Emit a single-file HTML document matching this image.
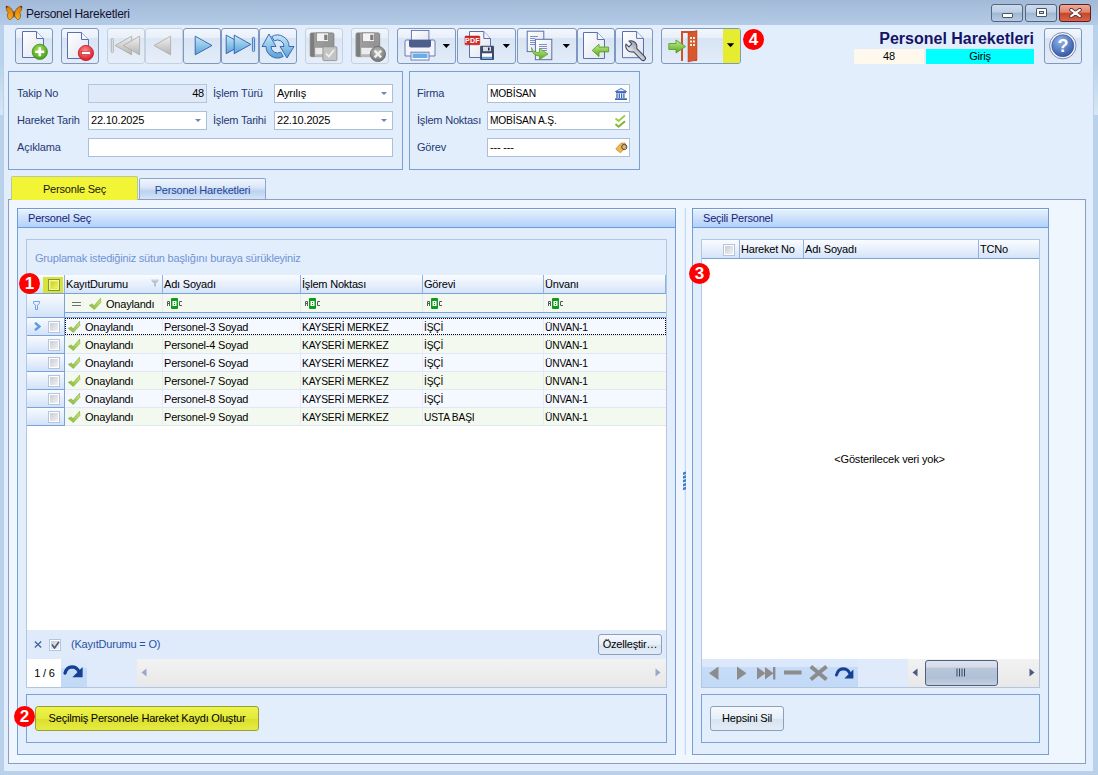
<!DOCTYPE html>
<html><head><meta charset="utf-8">
<style>
*{box-sizing:border-box;margin:0;padding:0}
html,body{width:1098px;height:775px;overflow:hidden}
body{position:relative;background:#b9d1ea;font-family:"Liberation Sans",sans-serif;font-size:11px;color:#000;letter-spacing:-0.2px}
.a{position:absolute}
#title{left:0;top:0;width:1098px;height:25px;background:linear-gradient(#a2bad8,#b3cbe6)}
#client{left:4px;top:25px;width:1089px;height:746px;background:#e3eefc}
.tb{position:absolute;top:28px;height:36px;border:1px solid #7f98c0;border-radius:3px;background:linear-gradient(#f3f7fd 0%,#e8eff9 26%,#d8e4f4 28%,#e3ecf8 100%)}
.tb.dis{border-color:#c3d1e4;background:linear-gradient(#f1f5fb 0%,#e9eff8 26%,#dde7f4 28%,#e6eef9 100%)}
.tb svg{position:absolute;left:-1px;top:-1px}
.wbtn{width:32px;height:18px;border:1px solid #56657c;border-radius:3px;background:linear-gradient(#cddcee 0%,#bccfe6 45%,#9fb6d2 50%,#b6cce6 100%)}
.wbtn.close{border-color:#5e1e1e;background:linear-gradient(#eeaa98 0%,#e0846c 45%,#c8452a 52%,#d8664a 100%)}
.badge{position:absolute;width:21px;height:21px;border-radius:50%;background:#f00;color:#fff;font-weight:bold;font-size:17px;line-height:22px;text-align:center;letter-spacing:0}
.gb{position:absolute;border:1px solid #7a9fd6;background:#e3eefd}
.lbl{position:absolute;color:#1f3a74;line-height:13px}
.fld{position:absolute;height:19px;border:1px solid #a9bfdc;background:#fff;line-height:17px;padding-left:2px;color:#000}
.ddarr{position:absolute;right:5px;top:7px;width:0;height:0;border-left:3.5px solid transparent;border-right:3.5px solid transparent;border-top:3.5px solid #6b88b4}
.gbh{position:absolute;height:20px;border:1px solid #6f9ad6;background:linear-gradient(#ffffff 0,#e4effd 8%,#cde1fb 50%,#b0d2fb 100%);padding-left:10px;line-height:19px;color:#16227a}
.hdr{position:absolute;height:19px;border-right:1px solid #8fb2e2;border-bottom:1px solid #7aa2d8;background:linear-gradient(#fafcff,#e8f0fc 50%,#d4e4f9);line-height:18px}
.ind{position:absolute;width:38px;border-right:1px solid #7aa2d8;border-bottom:1px solid #7aa2d8;background:linear-gradient(#f8fbff,#d2e2f9)}
.chk{position:absolute;width:12px;height:12px;border:1px solid #b3c5de;background:linear-gradient(135deg,#c4c8d0,#f6f6f6);box-shadow:inset 0 0 0 1px #fff}
.row{position:absolute;width:601px;height:18px;border-bottom:1px solid #dfe9f6}
.abc{position:absolute;height:11px;font-family:"Liberation Mono",monospace;font-size:8px;line-height:11px;letter-spacing:0}
.abc span{display:inline-block;width:5px;text-align:center}
.abc .g{color:#707070}
.abc .b{background:#16a030;color:#fff;width:7px;margin:0 0.5px}
.btn{position:absolute;border:1px solid #8ba0bc;border-radius:3px;background:linear-gradient(#f6f9fd,#e6eef8 50%,#d8e3f1 52%,#e4ecf6);text-align:center;color:#000}
</style></head>
<body>
<div id="title" class="a"></div>
<div id="client" class="a"></div>
<div class="a" style="left:0;top:62px;width:3px;height:53px;background:linear-gradient(#b9d1ea,#d8e6f3)"></div>
<div class="a" style="left:1094px;top:62px;width:4px;height:53px;background:linear-gradient(#b9d1ea,#d8e6f3)"></div>
<!-- titlebar -->
<svg class="a" style="left:5px;top:5px" width="18" height="16" viewBox="0 0 18 16">
 <defs><linearGradient id="bf" x1="0" y1="0" x2="0" y2="1"><stop offset="0" stop-color="#d87a0c"/><stop offset="0.55" stop-color="#ee960e"/><stop offset="1" stop-color="#f8ae18"/></linearGradient></defs>
 <path d="M8.4 8 C7.2 3.5 4.5 1.2 1.2 1.3 C0.9 3.5 1.6 6 3.2 7.6 C1.8 9.3 2 13 4.3 14.6 C6.2 15.2 7.6 12.5 8.4 10.5 Z" fill="url(#bf)" stroke="#6e3c0c" stroke-width="0.6"/>
 <path d="M9.6 8 C10.8 3.5 13.5 1.2 16.8 1.3 C17.1 3.5 16.4 6 14.8 7.6 C16.2 9.3 16 13 13.7 14.6 C11.8 15.2 10.4 12.5 9.6 10.5 Z" fill="url(#bf)" stroke="#6e3c0c" stroke-width="0.6"/>
 <path d="M8.5 6 L9.5 6 L9.4 12.5 L8.6 12.5 Z" fill="#4a2410"/>
 <path d="M0.8 1 L3 1.6 L1.6 3.2 Z M17.2 1 L15 1.6 L16.4 3.2 Z" fill="#4a2a14"/>
</svg>
<div class="a" style="left:26px;top:7px;font-size:12px;color:#15102e;line-height:14px;letter-spacing:-0.25px">Personel Hareketleri</div>
<div class="a wbtn" style="left:991px;top:4px"><div style="position:absolute;left:10px;top:8px;width:11px;height:5px;border:1px solid #4a5568;background:#fff;border-radius:1px"></div></div>
<div class="a wbtn" style="left:1025px;top:4px"><div style="position:absolute;left:10px;top:3px;width:11px;height:9px;border:1px solid #4a5568;background:#fff;border-radius:1px"><div style="position:absolute;left:2px;top:2px;width:5px;height:3px;border:1px solid #4a5568;background:#c8d8ea"></div></div></div>
<div class="a wbtn close" style="left:1059px;top:4px"><svg style="position:absolute;left:9px;top:3px" width="13" height="10" viewBox="0 0 13 10"><path d="M2.2 1.8 L10.8 8.2 M10.8 1.8 L2.2 8.2" stroke="#4a2a2a" stroke-width="3.8" stroke-linecap="round"/><path d="M2.2 1.8 L10.8 8.2 M10.8 1.8 L2.2 8.2" stroke="#fff" stroke-width="2.2" stroke-linecap="round"/></svg></div>
<!-- toolbar -->
<div class="tb" style="left:15px;width:38px"><svg width="38" height="36" viewBox="0 0 38 36">
 <defs><linearGradient id="pg" x1="0" y1="0" x2="1" y2="1"><stop offset="0" stop-color="#ffffff"/><stop offset="1" stop-color="#dfe4ee"/></linearGradient>
 <radialGradient id="gg" cx="0.45" cy="0.35" r="0.7"><stop offset="0" stop-color="#a6de5a"/><stop offset="1" stop-color="#3f9a16"/></radialGradient>
 <radialGradient id="rg" cx="0.45" cy="0.35" r="0.7"><stop offset="0" stop-color="#ff8c8c"/><stop offset="1" stop-color="#d8101c"/></radialGradient>
 <radialGradient id="xg" cx="0.45" cy="0.35" r="0.7"><stop offset="0" stop-color="#bdbdbd"/><stop offset="1" stop-color="#6e6e6e"/></radialGradient>
 <linearGradient id="ag" x1="0" y1="0" x2="0" y2="1"><stop offset="0" stop-color="#c4e9f8"/><stop offset="1" stop-color="#5aa1d8"/></linearGradient>
 <linearGradient id="dg" x1="0" y1="0" x2="0" y2="1"><stop offset="0" stop-color="#f0f0f0"/><stop offset="1" stop-color="#b4b4b4"/></linearGradient>
 <linearGradient id="grn" x1="0" y1="0" x2="0" y2="1"><stop offset="0" stop-color="#c7ec8e"/><stop offset="1" stop-color="#58a824"/></linearGradient>
 <linearGradient id="ck" x1="1" y1="0" x2="0" y2="1"><stop offset="0" stop-color="#cae870"/><stop offset="1" stop-color="#86b83a"/></linearGradient>
 <linearGradient id="wg" x1="0" y1="0" x2="1" y2="0"><stop offset="0" stop-color="#eef0f4"/><stop offset="1" stop-color="#98a0ac"/></linearGradient>
 <linearGradient id="fl" x1="0" y1="0" x2="1" y2="1"><stop offset="0" stop-color="#a8a8a8"/><stop offset="1" stop-color="#8a8a8a"/></linearGradient>
 </defs>
 <path d="M7.5 3.5 H21.5 L28.5 10.5 V29.5 H7.5 Z" fill="url(#pg)" stroke="#5a6fae" stroke-width="1"/>
 <path d="M21.5 3.5 V10.5 H28.5" fill="#f4f6fa" stroke="#5a6fae" stroke-width="1"/>
 <circle cx="24.8" cy="23.8" r="7.6" fill="url(#gg)" stroke="#3b8a18" stroke-width="0.8"/>
 <path d="M24.8 19.3 V28.3 M20.3 23.8 H29.3" stroke="#fff" stroke-width="2.6"/>
</svg></div>
<div class="tb" style="left:61px;width:38px"><svg width="38" height="36" viewBox="0 0 38 36">
 <path d="M6.5 4.5 H20.5 L27.5 11.5 V30.5 H6.5 Z" fill="url(#pg)" stroke="#5a6fae" stroke-width="1"/>
 <path d="M20.5 4.5 V11.5 H27.5" fill="#f4f6fa" stroke="#5a6fae" stroke-width="1"/>
 <circle cx="24.9" cy="25" r="7.6" fill="url(#rg)" stroke="#c01020" stroke-width="0.8"/>
 <rect x="20.3" y="23.3" width="9.2" height="3.4" fill="#fff" stroke="#b01020" stroke-width="0.6"/>
</svg></div>
<div class="tb dis" style="left:107px;width:38px"><svg width="38" height="36" viewBox="0 0 38 36">
 <rect x="4.3" y="10.4" width="2" height="14.2" rx="1" fill="#e6e6e6" stroke="#a6a6a6" stroke-width="0.8"/>
 <path d="M8.2 17.5 L24.6 8.2 V26.8 Z" fill="url(#dg)" stroke="#a8a8a8" stroke-width="0.8"/>
 <path d="M16.2 17.5 L32.6 8.2 V26.8 Z" fill="url(#dg)" stroke="#a8a8a8" stroke-width="0.8"/>
</svg></div>
<div class="tb dis" style="left:145px;width:38px"><svg width="38" height="36" viewBox="0 0 38 36">
 <path d="M9 17.5 L25.6 8.2 V26.8 Z" fill="url(#dg)" stroke="#a8a8a8" stroke-width="0.8"/>
</svg></div>
<div class="tb" style="left:183px;width:38px"><svg width="38" height="36" viewBox="0 0 38 36">
 <path d="M12.2 8.2 L29 17.5 L12.2 26.8 Z" fill="url(#ag)" stroke="#2e5fae" stroke-width="0.9"/>
</svg></div>
<div class="tb" style="left:221px;width:38px"><svg width="38" height="36" viewBox="0 0 38 36">
 <path d="M5.2 7.1 L21.9 16.4 L5.2 25.7 Z" fill="url(#ag)" stroke="#2e5fae" stroke-width="0.9"/>
 <path d="M13.2 7.1 L29.9 16.4 L13.2 25.7 Z" fill="url(#ag)" stroke="#2e5fae" stroke-width="0.9"/>
 <rect x="31.4" y="9.3" width="2.2" height="14.2" rx="1" fill="#a8d4f0" stroke="#2e5fae" stroke-width="0.8"/>
</svg></div>
<div class="tb" style="left:259px;width:38px"><svg width="38" height="36" viewBox="0 0 38 36">
 <path d="M24.25 28.46 A11.5 11.5 0 0 1 7 18.5 L3 18.5 L10 6 L17 18.5 L12 18.5 A6.5 6.5 0 0 0 21.75 24.13 Z" fill="url(#ag)" stroke="#2e5fae" stroke-width="0.9" stroke-linejoin="round"/>
 <path d="M12.75 8.54 A11.5 11.5 0 0 1 30 18.5 L35 18.5 L28 30 L21 18.5 L25 18.5 A6.5 6.5 0 0 0 15.25 12.87 Z" fill="url(#ag)" stroke="#2e5fae" stroke-width="0.9" stroke-linejoin="round"/>
</svg></div>
<div class="tb dis" style="left:305px;width:38px"><svg width="38" height="36" viewBox="0 0 38 36">
 <rect x="5.2" y="4.9" width="23.7" height="23.7" rx="1.5" fill="url(#fl)" stroke="#7a7a7a" stroke-width="0.8"/>
 <rect x="5.6" y="5.3" width="3.6" height="23" fill="#7c7c7c"/>
 <rect x="11.5" y="4.9" width="12" height="8.8" fill="#f2f2f2" stroke="#808080" stroke-width="0.7"/>
 <rect x="19.2" y="6.8" width="3.2" height="5.2" fill="#7e7e7e"/>
 <rect x="10.2" y="19.8" width="13.2" height="8.6" fill="#ececec"/>
 <rect x="10.2" y="26.2" width="13.2" height="2.2" fill="#b8b8b8"/>
 <rect x="17.9" y="18.8" width="14" height="13.8" rx="1" fill="#c4c4c4" stroke="#8a8a8a" stroke-width="0.8"/>
 <path d="M21 25.5 L23.8 28.5 L29 22" fill="none" stroke="#f2f2f2" stroke-width="1.6"/>
</svg></div>
<div class="tb dis" style="left:351px;width:38px"><svg width="38" height="36" viewBox="0 0 38 36">
 <rect x="5" y="4.9" width="23.7" height="23.7" rx="1.5" fill="url(#fl)" stroke="#7a7a7a" stroke-width="0.8"/>
 <rect x="5.4" y="5.3" width="3.6" height="23" fill="#7c7c7c"/>
 <rect x="11.5" y="4.9" width="12" height="8.8" fill="#f2f2f2" stroke="#808080" stroke-width="0.7"/>
 <rect x="19.2" y="6.8" width="3.2" height="5.2" fill="#7e7e7e"/>
 <rect x="10.2" y="19.8" width="13.2" height="8.6" fill="#ececec"/>
 <rect x="10.2" y="26.2" width="13.2" height="2.2" fill="#b8b8b8"/>
 <circle cx="26.9" cy="26" r="7.6" fill="url(#xg)" stroke="#6a6a6a" stroke-width="0.8"/>
 <path d="M23.6 22.7 L30.2 29.3 M30.2 22.7 L23.6 29.3" stroke="#f0f0f0" stroke-width="2.4"/>
</svg></div>
<div class="tb" style="left:397px;width:59px"><svg width="59" height="36" viewBox="0 0 59 36">
 <rect x="14.4" y="2.4" width="17.5" height="12" fill="url(#pg)" stroke="#5a6fae" stroke-width="0.9"/>
 <path d="M9 12 H37 Q38 12 38 14 V28 H8 V14 Q8 12 9 12 Z" fill="#f2f4fa" stroke="#5a6fae" stroke-width="0.9"/>
 <path d="M12 12 H34 V17.5 Q34 19.5 32 19.5 H14 Q12 19.5 12 17.5 Z" fill="#4e5f8e"/>
 <rect x="14" y="24.2" width="18" height="7.8" fill="#fff" stroke="#5a6fae" stroke-width="0.9"/>
 <rect x="15.5" y="25.5" width="15" height="4.5" fill="#6aaee8"/>
 <path d="M45.7 15.9 H53 L49.35 19.9 Z" fill="#000"/>
</svg></div>
<div class="tb" style="left:457px;width:59px"><svg width="59" height="36" viewBox="0 0 59 36">
 <path d="M12.5 3.5 H26.8 L33.5 10.5 V29.5 H12.5 Z" fill="url(#pg)" stroke="#5a6fae" stroke-width="1"/>
 <path d="M26.8 3.5 V10.5 H33.5" fill="#f4f6fa" stroke="#5a6fae" stroke-width="1"/>
 <rect x="8" y="8" width="14.8" height="8.8" rx="0.8" fill="#d42a2a" stroke="#a01818" stroke-width="0.5"/>
 <text x="15.4" y="15.2" font-family="Liberation Sans" font-weight="bold" font-size="7" fill="#fff" text-anchor="middle" letter-spacing="0.3">PDF</text>
 <rect x="23.1" y="17.8" width="13.9" height="14.1" rx="1" fill="#3c4a6c"/>
 <rect x="26" y="18.8" width="8" height="4.4" fill="#d8dde8"/>
 <rect x="31" y="19.5" width="1.5" height="3" fill="#223"/>
 <rect x="25" y="25.3" width="10" height="5.6" fill="#fff"/>
 <rect x="25" y="28.8" width="10" height="2.1" fill="#5aa0e0"/>
 <path d="M45.7 15.9 H53 L49.35 19.9 Z" fill="#000"/>
</svg></div>
<div class="tb" style="left:517px;width:60px"><svg width="59" height="36" viewBox="0 0 59 36">
 <rect x="10.2" y="3.2" width="16.6" height="20.4" fill="url(#pg)" stroke="#5a6fae" stroke-width="1"/>
 <path d="M13 8.5 H21 M13 10.5 H18 M13 12.5 H18 M13 14.5 H18 M13 16.5 H18" stroke="#8090c8" stroke-width="1"/>
 <rect x="18.4" y="11.3" width="16.4" height="20.4" fill="url(#pg)" stroke="#5a6fae" stroke-width="1"/>
 <path d="M22 16.5 H30 M22 18.5 H30 M22 20.5 H30 M22 22.5 H30" stroke="#8090c8" stroke-width="1"/>
 <path d="M14.5 19.5 Q15.5 24.5 22.5 24.5 V20.5 L31 26 L22.5 31.5 V28 Q15 28 14.5 19.5 Z" fill="url(#grn)" stroke="#4a9a1c" stroke-width="0.7"/>
 <path d="M45.7 15.9 H53 L49.35 19.9 Z" fill="#000"/>
</svg></div>
<div class="tb" style="left:577px;width:38px"><svg width="38" height="36" viewBox="0 0 38 36">
 <path d="M6.5 4.5 H20.3 L27.5 11.5 V30.5 H6.5 Z" fill="url(#pg)" stroke="#5a6fae" stroke-width="1"/>
 <path d="M20.3 4.5 V11.5 H27.5" fill="#f4f6fa" stroke="#5a6fae" stroke-width="1"/>
 <path d="M15.2 22.4 L22 16.2 V19.1 H31.6 V23.9 H22 V28.6 Z" fill="url(#grn)" stroke="#4a9a1c" stroke-width="0.8"/>
</svg></div>
<div class="tb" style="left:615px;width:38px"><svg width="38" height="36" viewBox="0 0 38 36">
 <path d="M7.5 3.5 H21.6 L28.5 10.4 V29.7 H7.5 Z" fill="url(#pg)" stroke="#5a6fae" stroke-width="1"/>
 <path d="M21.6 3.5 V10.4 H28.5" fill="#f4f6fa" stroke="#5a6fae" stroke-width="1"/>
 <g transform="translate(16.5 18.5) rotate(-45)"><path d="M-2.3 16.5 A2.3 2.3 0 0 0 2.3 16.5 L2.3 5 A6 6 0 0 0 2.1 -5.62 L2.1 -1.6 L-2.1 -1.6 L-2.1 -5.62 A6 6 0 0 0 -2.3 5 Z" fill="url(#wg)" stroke="#3c4458" stroke-width="1" stroke-linejoin="round"/></g>
</svg></div>
<div class="tb" style="left:661px;width:80px;overflow:hidden"><svg width="80" height="36" viewBox="0 0 80 36">
 <rect x="62" y="1" width="18" height="34" fill="#e6ec30"/>
 <path d="M20 3 H36 V33 H33 V5 H22 V33 H20 Z" fill="#d4502a"/>
 <path d="M27 5 L36 2.5 V32 L27 34 Z" fill="#d9572e" stroke="#b03a18" stroke-width="0.5"/>
 <rect x="29" y="9" width="2" height="2" fill="#e8f4e0"/><rect x="32" y="9" width="2" height="2" fill="#e8f4e0"/>
 <rect x="29" y="12.5" width="2" height="2" fill="#e8f4e0"/><rect x="32" y="12.5" width="2" height="2" fill="#e8f4e0"/>
 <rect x="29" y="16" width="2" height="2" fill="#e8f4e0"/><rect x="32" y="16" width="2" height="2" fill="#e8f4e0"/>
 <path d="M7.8 15.5 H15 V12 L24.6 18.5 L15 25 V21.5 H7.8 Z" fill="url(#grn)" stroke="#4a9a1c" stroke-width="0.8"/>
 <path d="M65.9 15.3 H73.2 L69.55 19.3 Z" fill="#000"/>
</svg></div>
<div class="badge" style="left:743px;top:29px">4</div>
<!-- header right -->
<div class="a" style="left:854px;top:30px;width:180px;text-align:right;font-weight:bold;font-size:16px;line-height:18px;color:#141466;letter-spacing:0">Personel Hareketleri</div>
<div class="a" style="left:854px;top:49px;width:70px;height:15px;background:#fff8ec;text-align:center;line-height:15px">48</div>
<div class="a" style="left:926px;top:49px;width:108px;height:15px;background:#00ffff;text-align:center;line-height:15px">Giriş</div>
<div class="tb" style="left:1044px;width:38px"><svg width="38" height="36" viewBox="0 0 38 36">
 <defs><radialGradient id="hg" cx="0.4" cy="0.3" r="0.8"><stop offset="0" stop-color="#8fb4ea"/><stop offset="1" stop-color="#2a4fa0"/></radialGradient></defs>
 <circle cx="18.8" cy="17.7" r="13.2" fill="#f4f6fa" stroke="#7d8aa8" stroke-width="1"/>
 <circle cx="18.8" cy="17.7" r="11" fill="url(#hg)" stroke="#2a4690" stroke-width="0.6"/>
 <text x="18.8" y="23.8" font-family="Liberation Sans" font-weight="bold" font-size="18" fill="#fff" text-anchor="middle">?</text>
</svg></div>
<!-- forms -->
<div class="gb" style="left:8px;top:71px;width:395px;height:99px"></div>
<div class="lbl" style="left:17px;top:87px">Takip No</div>
<div class="fld" style="left:88px;top:84px;width:119px;background:#dfe9f7;border-color:#b3c6de;text-align:right;padding-right:2px">48</div>
<div class="lbl" style="left:213px;top:87px">İşlem Türü</div>
<div class="fld" style="left:274px;top:84px;width:119px">Ayrılış<div class="ddarr"></div></div>
<div class="lbl" style="left:17px;top:114px">Hareket Tarih</div>
<div class="fld" style="left:88px;top:111px;width:119px">22.10.2025<div class="ddarr"></div></div>
<div class="lbl" style="left:213px;top:114px">İşlem Tarihi</div>
<div class="fld" style="left:274px;top:111px;width:119px">22.10.2025<div class="ddarr"></div></div>
<div class="lbl" style="left:17px;top:141px">Açıklama</div>
<div class="fld" style="left:88px;top:138px;width:305px"></div>

<div class="gb" style="left:409px;top:71px;width:231px;height:99px"></div>
<div class="lbl" style="left:417px;top:87px">Firma</div>
<div class="fld" style="left:487px;top:84px;width:143px"><span style="display:inline-block;transform:scaleX(0.93);transform-origin:0 0">MOBİSAN</span>
<svg style="position:absolute;left:126px;top:3px" width="14" height="13" viewBox="0 0 14 13"><path d="M7 0.5 L12.5 3.5 H1.5 Z" fill="#e8f0fc" stroke="#3b68b8" stroke-width="0.9"/><rect x="2" y="4" width="10" height="1.2" fill="#3b68b8"/><path d="M3 5.5 V10 M5.3 5.5 V10 M7.6 5.5 V10 M9.9 5.5 V10" stroke="#3b68b8" stroke-width="1.3"/><rect x="1" y="10.3" width="12" height="1.8" rx="0.6" fill="#3b68b8"/></svg></div>
<div class="lbl" style="left:417px;top:114px">İşlem Noktası</div>
<div class="fld" style="left:487px;top:111px;width:143px"><span style="display:inline-block;transform:scaleX(0.93);transform-origin:0 0">MOBİSAN A.Ş.</span>
<svg style="position:absolute;left:126px;top:2px" width="13" height="15" viewBox="0 0 13 15"><path d="M1.5 4.5 L4.5 7 L11 1.5" fill="none" stroke="#9ccc48" stroke-width="1.8"/><path d="M1.5 10 L4.5 12.8 L11 7.3" fill="none" stroke="#7cb42c" stroke-width="1.8"/></svg></div>
<div class="lbl" style="left:417px;top:141px">Görev</div>
<div class="fld" style="left:487px;top:138px;width:143px">--- ---
<svg style="position:absolute;left:127px;top:3px" width="13" height="12" viewBox="0 0 13 12"><path d="M0.8 7 L6 1.2 L10 1 L11 5 L5.5 10.8 Z" fill="#f2b850" stroke="#c88420" stroke-width="0.8"/><circle cx="9.3" cy="5" r="2.6" fill="none" stroke="#2a3450" stroke-width="0.9"/></svg></div>
<!-- tabs -->
<div class="a" style="left:8px;top:199px;width:1078px;height:565px;border:1px solid #8e9ec2;background:#f0f6fe"></div>
<div class="a" style="left:11px;top:176px;width:127px;height:24px;background:#f2f535;border:1px solid #b8c8a0;border-bottom:none;border-radius:2px 2px 0 0;text-align:center;line-height:24px;color:#161616">Personle Seç</div>
<div class="a" style="left:139px;top:178px;width:127px;height:21px;background:linear-gradient(#f0f5fd 0%,#dce8f8 40%,#bcd2f0 62%,#d6e4f7 100%);border:1px solid #8aa6cf;border-bottom:none;border-radius:2px 2px 0 0;text-align:center;line-height:22px;color:#23479a">Personel Hareketleri</div>
<!-- left groupbox -->
<div class="gb" style="left:17px;top:208px;width:659px;height:547px"></div>
<div class="gbh" style="left:17px;top:208px;width:659px">Personel Seç</div>
<div class="a" style="left:26px;top:239px;width:641px;height:449px;border:1px solid #b3c6df;background:#fff"></div>
<div class="a" style="left:27px;top:240px;width:639px;height:35px;background:#e3eefd"></div>
<div class="a" style="left:35px;top:252px;color:#6f94d2;line-height:13px">Gruplamak istediğiniz sütun başlığını buraya sürükleyiniz</div>
<div class="hdr" style="left:27px;top:275px;width:38px"></div>
<div class="a" style="left:43px;top:277px;width:20px;height:16px;background:#d6e33a"></div>
<div class="chk" style="left:48px;top:279px;background:#dfe850;border-color:#8c9438;box-shadow:inset 0 0 0 1px #f4f890"><div style="position:absolute;left:2px;top:2px;width:6px;height:6px;background:linear-gradient(135deg,#c8d030,#eef460)"></div></div>
<div class="hdr" style="left:65px;top:275px;width:98px;padding-left:1px">KayıtDurumu</div>
<div class="hdr" style="left:163px;top:275px;width:138px;padding-left:1px">Adı Soyadı</div>
<div class="hdr" style="left:301px;top:275px;width:122px;padding-left:1px">İşlem Noktası</div>
<div class="hdr" style="left:423px;top:275px;width:121px;padding-left:1px">Görevi</div>
<div class="hdr" style="left:544px;top:275px;width:122px;padding-left:1px">Ünvanı</div>
<svg class="a" style="left:151px;top:279px" width="8" height="8" viewBox="0 0 8 8"><path d="M0.5 0.5 H7.5 V2 L5 4.2 V7.5 H3 V4.2 L0.5 2 Z" fill="#b4c2d4"/><path d="M1.5 1 H6.5" stroke="#eef2f8" stroke-width="0.8"/></svg>
<div class="ind" style="left:27px;top:294px;height:24px"></div>
<svg class="a" style="left:32px;top:300px" width="9" height="11" viewBox="0 0 9 11"><path d="M1.5 1.5 H7.5 V3.2 L5.5 5.2 V9.5 H3.5 V5.2 L1.5 3.2 Z" fill="none" stroke="#6fa4e4" stroke-width="1"/></svg>
<div class="a" style="left:65px;top:294px;width:601px;height:19px;background:#f3f9ee;border-bottom:1px solid #7aa2d8"></div>
<div class="a" style="left:162px;top:294px;width:1px;height:18px;background:#e2ecf6"></div>
<div class="a" style="left:300px;top:294px;width:1px;height:18px;background:#e2ecf6"></div>
<div class="a" style="left:422px;top:294px;width:1px;height:18px;background:#e2ecf6"></div>
<div class="a" style="left:543px;top:294px;width:1px;height:18px;background:#e2ecf6"></div>
<div class="a" style="left:72px;top:302px;width:9px;height:1px;background:#707070"></div><div class="a" style="left:72px;top:305px;width:9px;height:1px;background:#707070"></div>
<svg class="a" style="left:89px;top:297px" width="13" height="13" viewBox="0 0 13 13"><path d="M0.3 8.3 L3.5 6.9 L4.9 9.1 L11.5 1.2 L11.8 5.5 L5.3 12.5 Z" fill="url(#ck)" stroke="#7aa83a" stroke-width="0.6" stroke-linejoin="round"/></svg>
<div class="a" style="left:106px;top:298px;line-height:13px">Onaylandı</div>
<svg class="a" style="left:166px;top:298px" width="17" height="11" viewBox="0 0 17 11"><path d="M1 8 V4 Q1 3 2 3 H3 Q4 3 4 4 V8 H3 V6 H2 V8 Z M2 4 V5 H3 V4 Z" fill="#5a5a5a"/><rect x="5" y="0" width="7" height="11" rx="1" fill="#0c9c1c"/><rect x="6.5" y="3" width="4" height="5" fill="#fff"/><rect x="8" y="4" width="1" height="1" fill="#0c9c1c"/><rect x="8" y="6" width="1" height="1" fill="#0c9c1c"/><path d="M13 4 Q13 3 14 3 H16 V4 H14 V7 H16 V8 H14 Q13 8 13 7 Z" fill="#5a5a5a"/></svg>
<svg class="a" style="left:304px;top:298px" width="17" height="11" viewBox="0 0 17 11"><path d="M1 8 V4 Q1 3 2 3 H3 Q4 3 4 4 V8 H3 V6 H2 V8 Z M2 4 V5 H3 V4 Z" fill="#5a5a5a"/><rect x="5" y="0" width="7" height="11" rx="1" fill="#0c9c1c"/><rect x="6.5" y="3" width="4" height="5" fill="#fff"/><rect x="8" y="4" width="1" height="1" fill="#0c9c1c"/><rect x="8" y="6" width="1" height="1" fill="#0c9c1c"/><path d="M13 4 Q13 3 14 3 H16 V4 H14 V7 H16 V8 H14 Q13 8 13 7 Z" fill="#5a5a5a"/></svg>
<svg class="a" style="left:426px;top:298px" width="17" height="11" viewBox="0 0 17 11"><path d="M1 8 V4 Q1 3 2 3 H3 Q4 3 4 4 V8 H3 V6 H2 V8 Z M2 4 V5 H3 V4 Z" fill="#5a5a5a"/><rect x="5" y="0" width="7" height="11" rx="1" fill="#0c9c1c"/><rect x="6.5" y="3" width="4" height="5" fill="#fff"/><rect x="8" y="4" width="1" height="1" fill="#0c9c1c"/><rect x="8" y="6" width="1" height="1" fill="#0c9c1c"/><path d="M13 4 Q13 3 14 3 H16 V4 H14 V7 H16 V8 H14 Q13 8 13 7 Z" fill="#5a5a5a"/></svg>
<svg class="a" style="left:547px;top:298px" width="17" height="11" viewBox="0 0 17 11"><path d="M1 8 V4 Q1 3 2 3 H3 Q4 3 4 4 V8 H3 V6 H2 V8 Z M2 4 V5 H3 V4 Z" fill="#5a5a5a"/><rect x="5" y="0" width="7" height="11" rx="1" fill="#0c9c1c"/><rect x="6.5" y="3" width="4" height="5" fill="#fff"/><rect x="8" y="4" width="1" height="1" fill="#0c9c1c"/><rect x="8" y="6" width="1" height="1" fill="#0c9c1c"/><path d="M13 4 Q13 3 14 3 H16 V4 H14 V7 H16 V8 H14 Q13 8 13 7 Z" fill="#5a5a5a"/></svg>
<div class="a" style="left:65px;top:313px;width:601px;height:5px;background:#e0ebfa;border-bottom:1px solid #7aa2d8"></div>
<div class="ind" style="left:27px;top:318px;height:18px"></div>
<div class="chk" style="left:48px;top:321px"></div>
<div class="row" style="left:65px;top:318px;background:#f5f9ff"></div>
<div class="a" style="left:162px;top:318px;width:1px;height:17px;background:#e3ecf7"></div>
<div class="a" style="left:300px;top:318px;width:1px;height:17px;background:#e3ecf7"></div>
<div class="a" style="left:422px;top:318px;width:1px;height:17px;background:#e3ecf7"></div>
<div class="a" style="left:543px;top:318px;width:1px;height:17px;background:#e3ecf7"></div>
<svg class="a" style="left:68px;top:320px" width="13" height="13" viewBox="0 0 13 13"><path d="M0.3 8.3 L3.5 6.9 L4.9 9.1 L11.5 1.2 L11.8 5.5 L5.3 12.5 Z" fill="url(#ck)" stroke="#7aa83a" stroke-width="0.6" stroke-linejoin="round"/></svg>
<div class="a" style="left:85px;top:321px;line-height:13px">Onaylandı</div>
<div class="a" style="left:164px;top:321px;line-height:13px">Personel-3 Soyad</div>
<div class="a" style="left:302px;top:321px;line-height:13px;transform:scaleX(0.93);transform-origin:0 0">KAYSERİ MERKEZ</div>
<div class="a" style="left:424px;top:321px;line-height:13px;transform:scaleX(0.93);transform-origin:0 0">İŞÇİ</div>
<div class="a" style="left:545px;top:321px;line-height:13px;transform:scaleX(0.93);transform-origin:0 0">ÜNVAN-1</div>
<div class="ind" style="left:27px;top:336px;height:18px"></div>
<div class="chk" style="left:48px;top:339px"></div>
<div class="row" style="left:65px;top:336px;background:#f3f9ee"></div>
<div class="a" style="left:162px;top:336px;width:1px;height:17px;background:#e3ecf7"></div>
<div class="a" style="left:300px;top:336px;width:1px;height:17px;background:#e3ecf7"></div>
<div class="a" style="left:422px;top:336px;width:1px;height:17px;background:#e3ecf7"></div>
<div class="a" style="left:543px;top:336px;width:1px;height:17px;background:#e3ecf7"></div>
<svg class="a" style="left:68px;top:338px" width="13" height="13" viewBox="0 0 13 13"><path d="M0.3 8.3 L3.5 6.9 L4.9 9.1 L11.5 1.2 L11.8 5.5 L5.3 12.5 Z" fill="url(#ck)" stroke="#7aa83a" stroke-width="0.6" stroke-linejoin="round"/></svg>
<div class="a" style="left:85px;top:339px;line-height:13px">Onaylandı</div>
<div class="a" style="left:164px;top:339px;line-height:13px">Personel-4 Soyad</div>
<div class="a" style="left:302px;top:339px;line-height:13px;transform:scaleX(0.93);transform-origin:0 0">KAYSERİ MERKEZ</div>
<div class="a" style="left:424px;top:339px;line-height:13px;transform:scaleX(0.93);transform-origin:0 0">İŞÇİ</div>
<div class="a" style="left:545px;top:339px;line-height:13px;transform:scaleX(0.93);transform-origin:0 0">ÜNVAN-1</div>
<div class="ind" style="left:27px;top:354px;height:18px"></div>
<div class="chk" style="left:48px;top:357px"></div>
<div class="row" style="left:65px;top:354px;background:#f5f9ff"></div>
<div class="a" style="left:162px;top:354px;width:1px;height:17px;background:#e3ecf7"></div>
<div class="a" style="left:300px;top:354px;width:1px;height:17px;background:#e3ecf7"></div>
<div class="a" style="left:422px;top:354px;width:1px;height:17px;background:#e3ecf7"></div>
<div class="a" style="left:543px;top:354px;width:1px;height:17px;background:#e3ecf7"></div>
<svg class="a" style="left:68px;top:356px" width="13" height="13" viewBox="0 0 13 13"><path d="M0.3 8.3 L3.5 6.9 L4.9 9.1 L11.5 1.2 L11.8 5.5 L5.3 12.5 Z" fill="url(#ck)" stroke="#7aa83a" stroke-width="0.6" stroke-linejoin="round"/></svg>
<div class="a" style="left:85px;top:357px;line-height:13px">Onaylandı</div>
<div class="a" style="left:164px;top:357px;line-height:13px">Personel-6 Soyad</div>
<div class="a" style="left:302px;top:357px;line-height:13px;transform:scaleX(0.93);transform-origin:0 0">KAYSERİ MERKEZ</div>
<div class="a" style="left:424px;top:357px;line-height:13px;transform:scaleX(0.93);transform-origin:0 0">İŞÇİ</div>
<div class="a" style="left:545px;top:357px;line-height:13px;transform:scaleX(0.93);transform-origin:0 0">ÜNVAN-1</div>
<div class="ind" style="left:27px;top:372px;height:18px"></div>
<div class="chk" style="left:48px;top:375px"></div>
<div class="row" style="left:65px;top:372px;background:#f3f9ee"></div>
<div class="a" style="left:162px;top:372px;width:1px;height:17px;background:#e3ecf7"></div>
<div class="a" style="left:300px;top:372px;width:1px;height:17px;background:#e3ecf7"></div>
<div class="a" style="left:422px;top:372px;width:1px;height:17px;background:#e3ecf7"></div>
<div class="a" style="left:543px;top:372px;width:1px;height:17px;background:#e3ecf7"></div>
<svg class="a" style="left:68px;top:374px" width="13" height="13" viewBox="0 0 13 13"><path d="M0.3 8.3 L3.5 6.9 L4.9 9.1 L11.5 1.2 L11.8 5.5 L5.3 12.5 Z" fill="url(#ck)" stroke="#7aa83a" stroke-width="0.6" stroke-linejoin="round"/></svg>
<div class="a" style="left:85px;top:375px;line-height:13px">Onaylandı</div>
<div class="a" style="left:164px;top:375px;line-height:13px">Personel-7 Soyad</div>
<div class="a" style="left:302px;top:375px;line-height:13px;transform:scaleX(0.93);transform-origin:0 0">KAYSERİ MERKEZ</div>
<div class="a" style="left:424px;top:375px;line-height:13px;transform:scaleX(0.93);transform-origin:0 0">İŞÇİ</div>
<div class="a" style="left:545px;top:375px;line-height:13px;transform:scaleX(0.93);transform-origin:0 0">ÜNVAN-1</div>
<div class="ind" style="left:27px;top:390px;height:18px"></div>
<div class="chk" style="left:48px;top:393px"></div>
<div class="row" style="left:65px;top:390px;background:#f5f9ff"></div>
<div class="a" style="left:162px;top:390px;width:1px;height:17px;background:#e3ecf7"></div>
<div class="a" style="left:300px;top:390px;width:1px;height:17px;background:#e3ecf7"></div>
<div class="a" style="left:422px;top:390px;width:1px;height:17px;background:#e3ecf7"></div>
<div class="a" style="left:543px;top:390px;width:1px;height:17px;background:#e3ecf7"></div>
<svg class="a" style="left:68px;top:392px" width="13" height="13" viewBox="0 0 13 13"><path d="M0.3 8.3 L3.5 6.9 L4.9 9.1 L11.5 1.2 L11.8 5.5 L5.3 12.5 Z" fill="url(#ck)" stroke="#7aa83a" stroke-width="0.6" stroke-linejoin="round"/></svg>
<div class="a" style="left:85px;top:393px;line-height:13px">Onaylandı</div>
<div class="a" style="left:164px;top:393px;line-height:13px">Personel-8 Soyad</div>
<div class="a" style="left:302px;top:393px;line-height:13px;transform:scaleX(0.93);transform-origin:0 0">KAYSERİ MERKEZ</div>
<div class="a" style="left:424px;top:393px;line-height:13px;transform:scaleX(0.93);transform-origin:0 0">İŞÇİ</div>
<div class="a" style="left:545px;top:393px;line-height:13px;transform:scaleX(0.93);transform-origin:0 0">ÜNVAN-1</div>
<div class="ind" style="left:27px;top:408px;height:18px"></div>
<div class="chk" style="left:48px;top:411px"></div>
<div class="row" style="left:65px;top:408px;background:#f3f9ee"></div>
<div class="a" style="left:162px;top:408px;width:1px;height:17px;background:#e3ecf7"></div>
<div class="a" style="left:300px;top:408px;width:1px;height:17px;background:#e3ecf7"></div>
<div class="a" style="left:422px;top:408px;width:1px;height:17px;background:#e3ecf7"></div>
<div class="a" style="left:543px;top:408px;width:1px;height:17px;background:#e3ecf7"></div>
<svg class="a" style="left:68px;top:410px" width="13" height="13" viewBox="0 0 13 13"><path d="M0.3 8.3 L3.5 6.9 L4.9 9.1 L11.5 1.2 L11.8 5.5 L5.3 12.5 Z" fill="url(#ck)" stroke="#7aa83a" stroke-width="0.6" stroke-linejoin="round"/></svg>
<div class="a" style="left:85px;top:411px;line-height:13px">Onaylandı</div>
<div class="a" style="left:164px;top:411px;line-height:13px">Personel-9 Soyad</div>
<div class="a" style="left:302px;top:411px;line-height:13px;transform:scaleX(0.93);transform-origin:0 0">KAYSERİ MERKEZ</div>
<div class="a" style="left:424px;top:411px;line-height:13px;transform:scaleX(0.93);transform-origin:0 0">USTA BAŞI</div>
<div class="a" style="left:545px;top:411px;line-height:13px;transform:scaleX(0.93);transform-origin:0 0">ÜNVAN-1</div>
<div class="a" style="left:65px;top:318px;width:601px;height:17px;border:1px dotted #000"></div>
<svg class="a" style="left:34px;top:322px" width="7" height="9" viewBox="0 0 7 9"><path d="M1 0.8 L5.5 4.5 L1 8.2" fill="none" stroke="#5b9be6" stroke-width="2.4"/></svg>
<div class="a" style="left:27px;top:630px;width:639px;height:29px;background:#dfeafb"></div>
<svg class="a" style="left:34px;top:641px" width="8" height="7" viewBox="0 0 8 7"><path d="M0.8 0.5 L7.2 6.5 M7.2 0.5 L0.8 6.5" stroke="#3d5f9e" stroke-width="1.2"/></svg>
<div class="chk" style="left:49px;top:639px;width:12px;height:12px"></div>
<svg class="a" style="left:51px;top:641px" width="9" height="8" viewBox="0 0 9 8"><path d="M1 3.5 L3.5 7 L8 0.8" fill="none" stroke="#4a5a80" stroke-width="1.6"/></svg>
<div class="a" style="left:71px;top:638px;line-height:13px;color:#2a52a2">(KayıtDurumu = O)</div>
<div class="btn" style="left:598px;top:634px;width:64px;height:21px;line-height:19px">Özelleştir…</div>
<div class="a" style="left:27px;top:659px;width:639px;height:28px;background:#dfeafb"></div>
<div class="a" style="left:27px;top:659px;width:34px;height:28px;background:#fff;text-align:center;line-height:28px;padding-left:1px">1 / 6</div>
<div class="a" style="left:61px;top:659px;width:26px;height:28px;background:linear-gradient(#dde9fb 0%,#dbe8fb 32%,#c6dcf8 33%,#c2d9f7 100%)"></div>
<svg class="a" style="left:58px;top:658px" width="32" height="30" viewBox="0 0 32 30"><path d="M7 15.2 Q8.5 9 14 8.8 Q18.5 8.8 20.8 13.2" fill="none" stroke="#143f92" stroke-width="3.2" stroke-linecap="round"/><path d="M24.6 9 V19.2 H14.4 Z" fill="#143f92"/></svg>
<div class="a" style="left:137px;top:659px;width:529px;height:28px;background:linear-gradient(#f2f2f2,#e8e8e8)"></div>
<svg class="a" style="left:141px;top:668px" width="6" height="9" viewBox="0 0 6 9"><path d="M5.5 0.5 V8.5 L0.5 4.5 Z" fill="#98a8cc"/></svg>
<svg class="a" style="left:655px;top:668px" width="6" height="9" viewBox="0 0 6 9"><path d="M0.5 0.5 V8.5 L5.5 4.5 Z" fill="#98a8cc"/></svg>
<div class="a" style="left:26px;top:694px;width:641px;height:49px;border:1px solid #7aa2d8;background:#e3eefd"></div>
<div class="btn" style="left:35px;top:706px;width:224px;height:25px;line-height:23px;background:linear-gradient(#eef34a,#e4ea3a 50%,#dade30 52%,#e6ec40);border-color:#9a9e3a">Seçilmiş Personele Hareket Kaydı Oluştur</div>
<div class="badge" style="left:14px;top:706px">2</div>
<div class="badge" style="left:19px;top:273px">1</div>
<!-- splitter -->
<div class="a" style="left:684px;top:208px;width:1px;height:547px;background:#e4eefb"></div><div class="a" style="left:685px;top:208px;width:1px;height:547px;background:#c4d9f6"></div>
<!-- right groupbox -->
<div class="gb" style="left:692px;top:208px;width:357px;height:547px"></div>
<div class="gbh" style="left:692px;top:208px;width:357px">Seçili Personel</div>
<div class="a" style="left:701px;top:239px;width:339px;height:449px;border:1px solid #b3c6df;background:#fff"></div>
<div class="hdr" style="left:702px;top:240px;width:38px"></div>
<div class="chk" style="left:723px;top:244px"></div>
<div class="hdr" style="left:740px;top:240px;width:64px;padding-left:1px;">Hareket No</div>
<div class="hdr" style="left:804px;top:240px;width:175px;padding-left:1px;">Adı Soyadı</div>
<div class="hdr" style="left:979px;top:240px;width:60px;padding-left:1px;border-right:none;">TCNo</div>
<div class="a" style="left:740px;top:453px;width:299px;text-align:center;line-height:13px">&lt;Gösterilecek veri yok&gt;</div>
<div class="a" style="left:702px;top:659px;width:337px;height:28px;background:#dfeafb"></div>
<div class="a" style="left:702px;top:659px;width:156px;height:28px;background:linear-gradient(#dde9fb 0%,#dbe8fb 28%,#c6dcf8 29%,#c2d9f7 100%)"></div>
<svg class="a" style="left:702px;top:659px" width="156" height="28" viewBox="0 0 156 28">
 <path d="M16.5 7.5 V21 L7 14.2 Z" fill="#8c8c8c"/>
 <path d="M35 7.5 V21 L44.5 14.2 Z" fill="#8c8c8c"/>
 <path d="M55 8 V20.5 L63.5 14.2 Z M63 8 V20.5 L71.5 14.2 Z" fill="#8c8c8c"/><rect x="71" y="8" width="2.4" height="12.5" fill="#8c8c8c"/>
 <rect x="82" y="11.5" width="17.5" height="4" fill="#8c8c8c"/>
 <path d="M108.8 7.5 L124.5 20.5 M124.5 7.5 L108.8 20.5" stroke="#8c8c8c" stroke-width="4"/>
 <path d="M134.5 16 Q136 10 141 9.8 Q145.5 9.8 147.5 13.8" fill="none" stroke="#143f92" stroke-width="3" stroke-linecap="round"/><path d="M151.4 10.5 V19.6 H142.3 Z" fill="#143f92"/>
</svg>
<div class="a" style="left:908px;top:659px;width:131px;height:28px;background:linear-gradient(#f2f2f2,#e8e8e8)"></div>
<svg class="a" style="left:912px;top:668px" width="6" height="9" viewBox="0 0 6 9"><path d="M5.5 0.5 V8.5 L0.5 4.5 Z" fill="#4a5a80"/></svg>
<svg class="a" style="left:1029px;top:668px" width="6" height="9" viewBox="0 0 6 9"><path d="M0.5 0.5 V8.5 L5.5 4.5 Z" fill="#4a5a80"/></svg>
<div class="a" style="left:925px;top:660px;width:73px;height:26px;border:1px solid #4e5e84;border-radius:3px;background:linear-gradient(#dde3ec 0%,#d5dce8 25%,#b8c6d8 30%,#b0c0d6 70%,#c4d0e0 100%)"></div>
<svg class="a" style="left:956px;top:668px" width="10" height="9" viewBox="0 0 10 9"><path d="M1 0.5 V8.5 M3.5 0.5 V8.5 M6 0.5 V8.5 M8.5 0.5 V8.5" stroke="#3a4666" stroke-width="1"/></svg>
<div class="a" style="left:701px;top:694px;width:339px;height:49px;border:1px solid #7aa2d8;background:#e3eefd"></div>
<div class="btn" style="left:710px;top:706px;width:74px;height:25px;line-height:23px">Hepsini Sil</div>
<div class="badge" style="left:689px;top:263px">3</div>
<svg class="a" style="left:683px;top:471px" width="4" height="21" viewBox="0 0 4 21"><path d="M0 1.5 L3 0.5 V3 L0 4 Z M0 5.3 L3 4.3 V6.8 L0 7.8 Z M0 9.1 L3 8.1 V10.6 L0 11.6 Z M0 12.9 L3 11.9 V14.4 L0 15.4 Z M0 16.7 L3 15.7 V18.2 L0 19.2 Z" fill="#3f7bd0"/></svg>

</body></html>
